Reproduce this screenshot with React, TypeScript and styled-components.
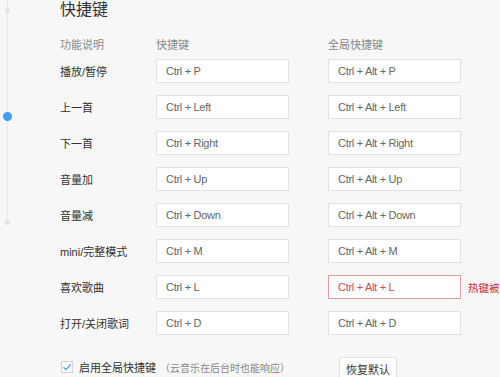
import React from 'react';
import styled, { createGlobalStyle } from 'styled-components';

const GlobalStyle = createGlobalStyle`
  html, body {
    margin: 0;
    padding: 0;
    background: #f7f7f7;
  }
  body {
    font-family: "Liberation Sans", "Noto Sans CJK SC", sans-serif;
    color: #333;
  }
`;

interface ShortcutRow {
  label: string
  local: string
  global: string
  conflict?: boolean
}

const rows: ShortcutRow[] = [
  { label: '播放/暂停', local: 'Ctrl + P', global: 'Ctrl + Alt + P' },
  { label: '上一首', local: 'Ctrl + Left', global: 'Ctrl + Alt + Left' },
  { label: '下一首', local: 'Ctrl + Right', global: 'Ctrl + Alt + Right' },
  { label: '音量加', local: 'Ctrl + Up', global: 'Ctrl + Alt + Up' },
  { label: '音量减', local: 'Ctrl + Down', global: 'Ctrl + Alt + Down' },
  { label: 'mini/完整模式', local: 'Ctrl + M', global: 'Ctrl + Alt + M' },
  { label: '喜欢歌曲', local: 'Ctrl + L', global: 'Ctrl + Alt + L', conflict: true },
  { label: '打开/关闭歌词', local: 'Ctrl + D', global: 'Ctrl + Alt + D' },
];

const Page = styled.div`
  display: flex;
  width: 500px;
  height: 377px;
  overflow: hidden;
`;

// 왼쪽 타임라인
const Rail = styled.div`
  position: relative;
  width: 15px;
  flex: none;
  &::before {
    content: '';
    position: absolute;
    left: 7px;
    top: 0;
    height: 222px;
    border-left: 1px dotted #dcdcdc;
  }
`;

const Dot = styled.span<{ $active?: boolean; $top: number }>`
  position: absolute;
  top: ${({ $top, $active }) => $top - ($active ? 4 : 2)}px;
  left: ${({ $active }) => ($active ? 3 : 5)}px;
  width: ${({ $active }) => ($active ? 9 : 5)}px;
  height: ${({ $active }) => ($active ? 9 : 5)}px;
  border-radius: 50%;
  background: ${({ $active }) => ($active ? '#3d9cf5' : '#e2e2e2')};
`;

const Content = styled.div`
  padding-left: 45px;
  flex: 1;
  min-width: 0;
`;

const Title = styled.h2`
  margin: 0;
  font-size: 16px;
  font-weight: normal;
  line-height: 20px;
  color: #333;
`;

const Header = styled.div`
  display: flex;
  margin-top: 14px;
  height: 20px;
  align-items: center;
  font-size: 11px;
  color: #888;
`;

const HeadCell = styled.div<{ $width: number }>`
  width: ${({ $width }) => $width}px;
  flex: none;
`;

const List = styled.div`
  display: flex;
  flex-direction: column;
  gap: 12px;
  margin-top: 5px;
`;

const Row = styled.div`
  display: flex;
  align-items: center;
  height: 24px;
`;

const Label = styled.div`
  width: 96px;
  flex: none;
  font-size: 11px;
  color: #333;
`;

const KeyBox = styled.div<{ $error?: boolean; $global?: boolean }>`
  box-sizing: border-box;
  width: 133px;
  height: 24px;
  flex: none;
  margin-left: ${({ $global }) => ($global ? 39 : 0)}px;
  padding-left: 9px;
  display: flex;
  align-items: center;
  background: #fff;
  border: 1px solid ${({ $error }) => ($error ? '#e99a9a' : '#e3e3e3')};
  font-size: 11px;
  letter-spacing: -0.3px;
  color: ${({ $error }) => ($error ? '#d2484f' : '#666')};
`;

const Warning = styled.span`
  margin-left: 7px;
  font-size: 10.5px;
  color: #c9282f;
  white-space: nowrap;
`;

const Footer = styled.div`
  display: flex;
  align-items: center;
  margin-top: 20px;
  height: 24px;
`;

const CheckLabel = styled.label`
  display: flex;
  align-items: center;
  width: 279px;
  flex: none;
  font-size: 11px;
  color: #333;
`;

const CheckBox = styled.span`
  box-sizing: border-box;
  width: 12px;
  height: 12px;
  margin-left: 1px;
  margin-right: 6px;
  border: 1px solid #d6d6d6;
  background: #fff;
  display: flex;
  align-items: center;
  justify-content: center;
`;

const Hint = styled.span`
  margin-left: 4px;
  font-size: 10px;
  color: #888;
`;

const ResetButton = styled.button`
  box-sizing: border-box;
  height: 24px;
  padding: 0 6px;
  margin-top: 3px;
  border: 1px solid #e1e1e1;
  border-radius: 3px;
  background: #fff;
  font-family: inherit;
  font-size: 11px;
  color: #333;
`;

export default function App() {
  return (
    <>
      <GlobalStyle />
      <Page>
        <Rail>
          <Dot $top={10} />
          <Dot $top={116} $active />
          <Dot $top={222} />
        </Rail>
        <Content>
          <Title>快捷键</Title>
          <Header>
            <HeadCell $width={96}>功能说明</HeadCell>
            <HeadCell $width={172}>快捷键</HeadCell>
            <HeadCell $width={133}>全局快捷键</HeadCell>
          </Header>
          <List>
            {rows.map((row) => (
              <Row key={row.label}>
                <Label>{row.label}</Label>
                <KeyBox>{row.local}</KeyBox>
                <KeyBox $global $error={row.conflict}>{row.global}</KeyBox>
                {row.conflict && <Warning>热键被</Warning>}
              </Row>
            ))}
          </List>
          <Footer>
            <CheckLabel>
              <CheckBox>
                <svg width="10" height="10" viewBox="0 0 10 10">
                  <path d="M1.5 5.2 L4 7.6 L8.8 2.4" fill="none" stroke="#3d9cf5" strokeWidth="1.2" />
                </svg>
              </CheckBox>
              启用全局快捷键<Hint>（云音乐在后台时也能响应）</Hint>
            </CheckLabel>
            <ResetButton>恢复默认</ResetButton>
          </Footer>
        </Content>
      </Page>
    </>
  );
}
